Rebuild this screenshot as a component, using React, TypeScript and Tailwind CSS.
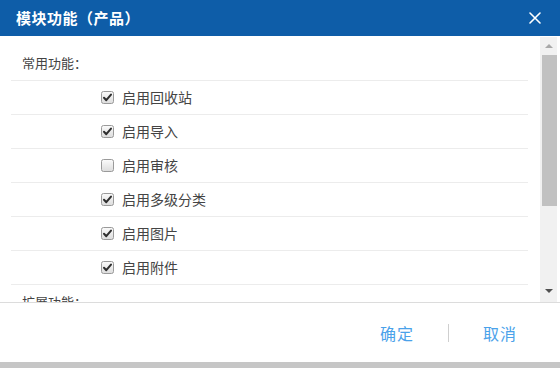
import React from "react";

const items = [
  { label: "启用回收站", checked: true },
  { label: "启用导入", checked: true },
  { label: "启用审核", checked: false },
  { label: "启用多级分类", checked: true },
  { label: "启用图片", checked: true },
  { label: "启用附件", checked: true },
];

const Checkbox = ({ checked }: { checked: boolean }) => (
  <svg width="13" height="13" viewBox="0 0 13 13" className="shrink-0">
    <defs>
      <linearGradient id="cbg" x1="0" y1="0" x2="0" y2="1">
        <stop offset="0" stopColor="#fbfbfb" />
        <stop offset="1" stopColor="#dcdcdc" />
      </linearGradient>
    </defs>
    <rect x="0.5" y="0.5" width="12" height="12" rx="2" fill="url(#cbg)" stroke="#9a9a9a" />
    {checked && (
      <path d="M3 6.8 L5.3 9.2 L10 3.6" fill="none" stroke="#2f2f2f" strokeWidth="2" strokeLinecap="round" strokeLinejoin="round" />
    )}
  </svg>
);

const SectionTitle = ({ text }: { text: string }) => (
  <div className="h-[35px] pl-[11px] flex items-center text-[13px] text-[#444] border-b border-[#ececec]">
    {text}
  </div>
);

export default function App() {
  return (
    <div
      className="w-[560px] h-[368px] flex flex-col bg-white overflow-hidden"
      style={{ fontFamily: '"Noto Sans CJK SC", "Noto Sans", sans-serif' }}
    >
      {/* header */}
      <div className="h-[36px] shrink-0 bg-[#0e5da8] flex items-center justify-between pl-4 pr-[19px]">
        <span className="text-white text-[15px] font-bold tracking-[0.5px]">模块功能（产品）</span>
        <svg width="12" height="12" viewBox="0 0 12 12">
          <path d="M1 1 L11 11 M11 1 L1 11" stroke="#fff" strokeWidth="1.6" strokeLinecap="round" />
        </svg>
      </div>

      {/* body */}
      <div className="h-[266px] shrink-0 flex">
        <div className="flex-1 overflow-hidden pt-[10px] pl-[11px] pr-[12px]">
          <SectionTitle text="常用功能：" />
          {items.map((item) => (
            <div
              key={item.label}
              className="h-[34px] flex items-center gap-[8px] pl-[90px] border-b border-[#ececec] text-[14px] text-[#444]"
            >
              <Checkbox checked={item.checked} />
              <span>{item.label}</span>
            </div>
          ))}
          <SectionTitle text="扩展功能：" />
        </div>
        {/* scrollbar */}
        <div className="w-[17px] mr-[3px] mt-[1px] bg-[#f1f1f1] flex flex-col">
          <div className="h-[18px] flex items-center justify-center">
            <div className="w-0 h-0 border-x-[4px] border-x-transparent border-b-[4px] border-b-[#a8a8a8]" />
          </div>
          <div className="h-[151px] ml-[2px] bg-[#c1c1c1]" />
          <div className="flex-1" />
          <div className="h-[18px] mb-[2px] flex items-center justify-center">
            <div className="w-0 h-0 border-x-[4px] border-x-transparent border-t-[4px] border-t-[#505050]" />
          </div>
        </div>
      </div>

      {/* footer */}
      <div className="h-[60px] shrink-0 border-t border-[#dcdcdc] flex items-center justify-end pr-[43px] text-[16px] text-[#4aa2ea]">
        <button className="tracking-[1px]">确定</button>
        <div className="w-px h-[18px] bg-[#cfcfcf] mx-[34px]" />
        <button className="tracking-[1px]">取消</button>
      </div>

      <div className="h-[6px] shrink-0 bg-[#c6c6c6]" />
    </div>
  );
}
